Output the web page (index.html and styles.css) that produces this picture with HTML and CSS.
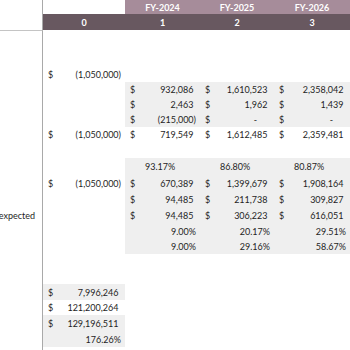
FILE: index.html
```html
<!DOCTYPE html>
<html>
<head>
<meta charset="utf-8">
<link rel="stylesheet" href="styles.css">
</head>
<body>
<div class="sheet">
  <div class="row h14">
    <div class="lbl"></div>
    <div class="c"></div>
    <div class="c fy">FY-2024</div>
    <div class="c fy">FY-2025</div>
    <div class="c fy">FY-2026</div>
  </div>
  <div class="row h16">
    <div class="lbl"></div>
    <div class="c idx">0</div>
    <div class="c idx">1</div>
    <div class="c idx">2</div>
    <div class="c idx">3</div>
  </div>
  <div class="row h37">
    <div class="lbl top"></div>
    <div class="c"></div><div class="c"></div><div class="c"></div><div class="c"></div>
  </div>
  <div class="row h15">
    <div class="lbl"></div>
    <div class="c acc"><span>$</span><span>(1,050,000)</span></div>
    <div class="c"></div><div class="c"></div><div class="c"></div>
  </div>
  <div class="row h15">
    <div class="lbl"></div>
    <div class="c"></div>
    <div class="c acc g"><span>$</span><span class="pos">932,086</span></div>
    <div class="c acc g"><span>$</span><span class="pos">1,610,523</span></div>
    <div class="c acc g"><span>$</span><span class="pos">2,358,042</span></div>
  </div>
  <div class="row h15">
    <div class="lbl"></div>
    <div class="c"></div>
    <div class="c acc g"><span>$</span><span class="pos">2,463</span></div>
    <div class="c acc g"><span>$</span><span class="pos">1,962</span></div>
    <div class="c acc g"><span>$</span><span class="pos">1,439</span></div>
  </div>
  <div class="row h15">
    <div class="lbl"></div>
    <div class="c"></div>
    <div class="c acc g"><span>$</span><span>(215,000)</span></div>
    <div class="c acc g"><span>$</span><span class="dash">-</span></div>
    <div class="c acc g"><span>$</span><span class="dash">-</span></div>
  </div>
  <div class="row h14">
    <div class="lbl"></div>
    <div class="c acc"><span>$</span><span>(1,050,000)</span></div>
    <div class="c acc"><span>$</span><span class="pos">719,549</span></div>
    <div class="c acc"><span>$</span><span class="pos">1,612,485</span></div>
    <div class="c acc"><span>$</span><span class="pos">2,359,481</span></div>
  </div>
  <div class="row h17">
    <div class="lbl"></div>
    <div class="c"></div><div class="c"></div><div class="c"></div><div class="c"></div>
  </div>
  <div class="row h17">
    <div class="lbl"></div>
    <div class="c"></div>
    <div class="c g pl">93.17%</div>
    <div class="c g pl">86.80%</div>
    <div class="c g pl">80.87%</div>
  </div>
  <div class="row h16">
    <div class="lbl"></div>
    <div class="c acc"><span>$</span><span>(1,050,000)</span></div>
    <div class="c acc g"><span>$</span><span class="pos">670,389</span></div>
    <div class="c acc g"><span>$</span><span class="pos">1,399,679</span></div>
    <div class="c acc g"><span>$</span><span class="pos">1,908,164</span></div>
  </div>
  <div class="row h16">
    <div class="lbl"></div>
    <div class="c"></div>
    <div class="c acc g"><span>$</span><span class="pos">94,485</span></div>
    <div class="c acc g"><span>$</span><span class="pos">211,738</span></div>
    <div class="c acc g"><span>$</span><span class="pos">309,827</span></div>
  </div>
  <div class="row h16">
    <div class="lbl">expected</div>
    <div class="c"></div>
    <div class="c acc g"><span>$</span><span class="pos">94,485</span></div>
    <div class="c acc g"><span>$</span><span class="pos">306,223</span></div>
    <div class="c acc g"><span>$</span><span class="pos">616,051</span></div>
  </div>
  <div class="row h16">
    <div class="lbl"></div>
    <div class="c"></div>
    <div class="c g pr">9.00%</div>
    <div class="c g pr">20.17%</div>
    <div class="c g pr">29.51%</div>
  </div>
  <div class="row h15">
    <div class="lbl"></div>
    <div class="c"></div>
    <div class="c g pr">9.00%</div>
    <div class="c g pr">29.16%</div>
    <div class="c g pr">58.67%</div>
  </div>
  <div class="row h30">
    <div class="lbl"></div>
    <div class="c"></div><div class="c"></div><div class="c"></div><div class="c"></div>
  </div>
  <div class="row h16">
    <div class="lbl"></div>
    <div class="c acc g"><span>$</span><span class="pos">7,996,246</span></div>
    <div class="c"></div><div class="c"></div><div class="c"></div>
  </div>
  <div class="row h15">
    <div class="lbl"></div>
    <div class="c acc"><span>$</span><span class="pos">121,200,264</span></div>
    <div class="c"></div><div class="c"></div><div class="c"></div>
  </div>
  <div class="row h16">
    <div class="lbl"></div>
    <div class="c acc g"><span>$</span><span class="pos">129,196,511</span></div>
    <div class="c"></div><div class="c"></div><div class="c"></div>
  </div>
  <div class="row h16">
    <div class="lbl"></div>
    <div class="c g pr">176.26%</div>
    <div class="c"></div><div class="c"></div><div class="c"></div>
  </div>
  <div class="row h10">
    <div class="lbl"></div>
    <div class="c"></div><div class="c"></div><div class="c"></div><div class="c"></div>
  </div>
</div>
</body>
</html>
```

FILE: styles.css
```css
html, body {
  margin: 0;
  padding: 0;
  background: #ffffff;
}
body {
  width: 350px;
  height: 350px;
  overflow: hidden;
  font-family: Lato, "Liberation Sans", sans-serif;
  font-size: 9px;
  color: #1e1e1e;
}
.sheet {
  display: flex;
  flex-direction: column;
}
.row {
  display: grid;
  grid-template-columns: 43px 82px 75px 74px 76px;
}
.h10 { height: 10px; }
.h14 { height: 14px; }
.h15 { height: 15px; }
.h16 { height: 16px; }
.h17 { height: 17px; }
.h30 { height: 30px; }
.h37 { height: 37px; }
.lbl {
  box-sizing: border-box;
  border-right: 1px solid #a9a9a9;
  text-align: right;
  padding-right: 7px;
  white-space: nowrap;
  overflow: hidden;
  display: flex;
  align-items: center;
  justify-content: flex-end;
}
.lbl.top {
  border-top: 1px solid #c4c4c4;
}
.c {
  box-sizing: border-box;
  display: flex;
  align-items: center;
  white-space: nowrap;
}
.fy {
  background: #a68c9a;
  color: #ffffff;
  font-weight: 700;
  justify-content: center;
  padding-top: 1px;
}
.idx {
  background: #685860;
  color: #ffffff;
  font-weight: 700;
  justify-content: center;
}
.g {
  background: #efefef;
}
.acc {
  justify-content: space-between;
  padding: 0 4px 0 5px;
}
.pos {
  margin-right: 2.5px;
}
.dash {
  margin-right: 13px;
}
.pl {
  padding-left: 20px;
}
.pr {
  justify-content: flex-end;
  padding-right: 4px;
}
```
